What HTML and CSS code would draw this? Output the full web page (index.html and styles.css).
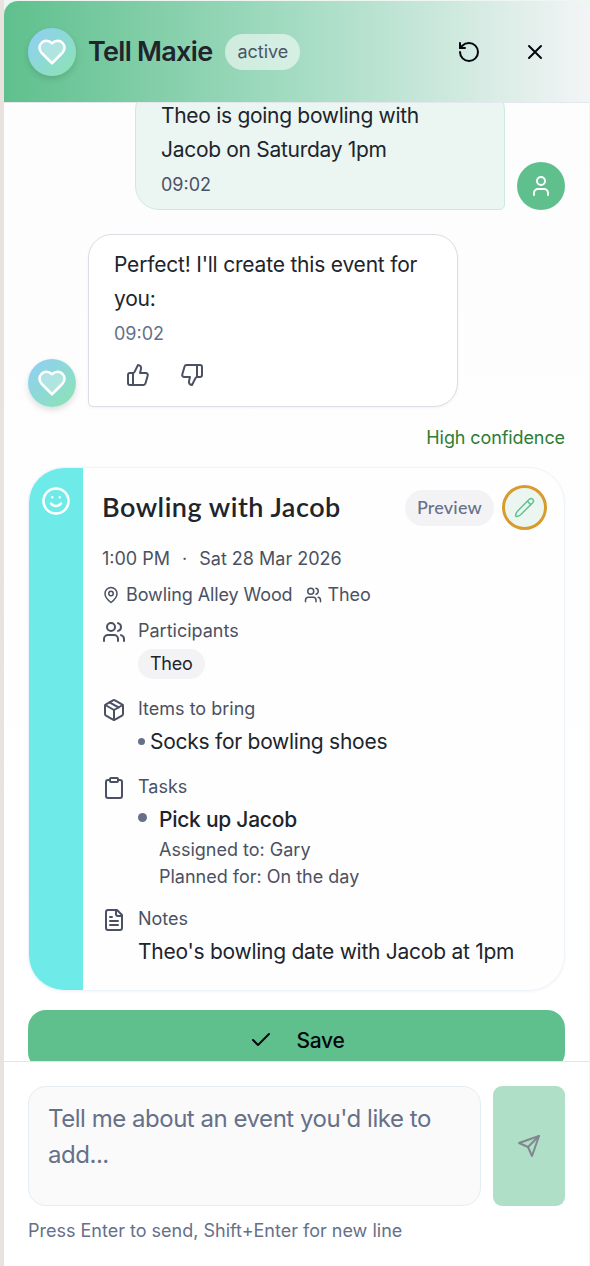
FILE: index.html
```html
<!DOCTYPE html>
<html lang="en">
<head>
    <meta charset="UTF-8">
    <title>Tell Maxie</title>
    <link rel="stylesheet" href="styles.css">
</head>
<body>
<svg class="defs">
    <symbol id="heart" viewBox="0 0 24 24"><path d="M19 14c1.49-1.46 3-3.21 3-5.5A5.5 5.5 0 0 0 16.5 3c-1.76 0-3 .5-4.5 2-1.5-1.5-2.74-2-4.5-2A5.5 5.5 0 0 0 2 8.5c0 2.3 1.5 4.05 3 5.5l7 7Z"/></symbol>
    <symbol id="users" viewBox="0 0 24 24"><path d="M16 21v-2a4 4 0 0 0-4-4H6a4 4 0 0 0-4 4v2"/><circle cx="9" cy="7" r="4"/><path d="M22 21v-2a4 4 0 0 0-3-3.87M16 3.13a4 4 0 0 1 0 7.75"/></symbol>
</svg>
<div class="panel">
    <header class="header">
        <div class="avatar"><svg class="icon"><use href="#heart"/></svg></div>
        <h1>Tell Maxie</h1>
        <span class="status">active</span>
        <button class="head-btn"><svg class="icon" viewBox="0 0 24 24"><path d="M3 12a9 9 0 1 0 9-9 9.75 9.75 0 0 0-6.74 2.74L3 8"/><path d="M3 3v5h5"/></svg></button>
        <button class="head-btn"><svg class="icon" viewBox="0 0 24 24"><path d="M18 6 6 18M6 6l12 12"/></svg></button>
    </header>
    <main class="messages">
        <div class="row user">
            <div class="bubble">
                <p>Theo is going bowling with<br>Jacob on Saturday 1pm</p>
                <time>09:02</time>
            </div>
            <div class="avatar"><svg class="icon" viewBox="0 0 24 24"><path d="M19 21v-2a4 4 0 0 0-4-4H9a4 4 0 0 0-4 4v2"/><circle cx="12" cy="7" r="4"/></svg></div>
        </div>
        <div class="row bot">
            <div class="avatar"><svg class="icon"><use href="#heart"/></svg></div>
            <div class="bubble">
                <p>Perfect! I'll create this event for<br>you:</p>
                <time>09:02</time>
                <div class="actions">
                    <svg class="icon" viewBox="0 0 24 24"><path d="M7 10v12"/><path d="M15 5.88 14 10h5.83a2 2 0 0 1 1.92 2.56l-2.33 8A2 2 0 0 1 17.5 22H4a2 2 0 0 1-2-2v-8a2 2 0 0 1 2-2h2.76a2 2 0 0 0 1.79-1.11L12 2a3.13 3.13 0 0 1 3 3.88Z"/></svg>
                    <svg class="icon" viewBox="0 0 24 24"><path d="M17 14V2"/><path d="M9 18.12 10 14H4.17a2 2 0 0 1-1.92-2.56l2.33-8A2 2 0 0 1 6.5 2H20a2 2 0 0 1 2 2v8a2 2 0 0 1-2 2h-2.76a2 2 0 0 0-1.79 1.11L12 22a3.13 3.13 0 0 1-3-3.88Z"/></svg>
                </div>
            </div>
        </div>
        <div class="confidence">High confidence</div>
        <article class="card">
            <div class="stripe"><svg class="icon" viewBox="0 0 24 24"><circle cx="12" cy="12" r="10"/><path d="M8 14s1.5 2 4 2 4-2 4-2M9 9h.01M15 9h.01"/></svg></div>
            <div class="content">
                <div class="card-head">
                    <h2>Bowling with Jacob</h2>
                    <span class="preview">Preview</span>
                    <button class="edit"><svg class="icon" viewBox="0 0 24 24"><path d="M17.3 3.2a2.5 2.5 0 0 1 3.5 3.5L8.2 19.3c-1 1-2.6 1.8-4.4 2-.8.1-1.2-.3-1.1-1.1.2-1.8 1-3.4 2-4.4Z"/><path d="m15 5.5 3.5 3.5"/></svg></button>
                </div>
                <div class="when"><span>1:00 PM</span><span>·</span><span>Sat 28 Mar 2026</span></div>
                <div class="where">
                    <svg class="icon" viewBox="0 0 24 24"><path d="M20 10c0 6-8 12-8 12s-8-6-8-12a8 8 0 0 1 16 0Z"/><circle cx="12" cy="10" r="3"/></svg>
                    <span>Bowling Alley Wood</span>
                    <svg class="icon"><use href="#users"/></svg>
                    <span>Theo</span>
                </div>
                <section>
                    <svg class="icon"><use href="#users"/></svg>
                    <div>
                        <h3>Participants</h3>
                        <div class="line"><span class="chip">Theo</span></div>
                    </div>
                </section>
                <section>
                    <svg class="icon" viewBox="0 0 24 24"><path d="m7.5 4.27 9 5.15"/><path d="M21 8a2 2 0 0 0-1-1.73l-7-4a2 2 0 0 0-2 0l-7 4A2 2 0 0 0 3 8v8a2 2 0 0 0 1 1.73l7 4a2 2 0 0 0 2 0l7-4A2 2 0 0 0 21 16Z"/><path d="m3.3 7 8.7 5 8.7-5M12 22V12"/></svg>
                    <div>
                        <h3>Items to bring</h3>
                        <div class="line"><i class="dot"></i>Socks for bowling shoes</div>
                    </div>
                </section>
                <section>
                    <svg class="icon" viewBox="0 0 24 24"><rect width="8" height="4" x="8" y="2" rx="1"/><path d="M16 4h2a2 2 0 0 1 2 2v14a2 2 0 0 1-2 2H6a2 2 0 0 1-2-2V6a2 2 0 0 1 2-2h2"/></svg>
                    <div>
                        <h3>Tasks</h3>
                        <div class="line task"><i class="dot big"></i>Pick up Jacob</div>
                        <p class="sub">Assigned to: Gary</p>
                        <p class="sub">Planned for: On the day</p>
                    </div>
                </section>
                <section>
                    <svg class="icon" viewBox="0 0 24 24"><path d="M15 2H6a2 2 0 0 0-2 2v16a2 2 0 0 0 2 2h12a2 2 0 0 0 2-2V7Z"/><path d="M14 2v4a2 2 0 0 0 2 2h4M10 9H8M16 13H8M16 17H8"/></svg>
                    <div>
                        <h3>Notes</h3>
                        <div class="line">Theo's bowling date with Jacob at 1pm</div>
                    </div>
                </section>
            </div>
        </article>
        <button class="save"><svg class="icon" viewBox="0 0 24 24"><path d="M20 6 9 17l-5-5"/></svg>Save</button>
    </main>
    <footer class="footer">
        <div class="compose">
            <textarea placeholder="Tell me about an event you'd like to add..."></textarea>
            <button class="send"><svg class="icon" viewBox="0 0 24 24"><path d="m22 2-7 20-4-9-9-4Z"/><path d="M22 2 11 13"/></svg></button>
        </div>
        <p class="hint">Press Enter to send, Shift+Enter for new line</p>
    </footer>
</div>
</body>
</html>
```
FILE: styles.css
```css
*{
    margin:0;
    padding:0;
    box-sizing:border-box;
}
body{
    height:1266px;
    padding:1px 1px 0 4px;
    overflow:hidden;
    background:linear-gradient(90deg,#e9e2de 4px,#eef6f2 4px);
    font-family:Inter, "Liberation Sans", sans-serif;
    font-size:18px;
    line-height:27px;
    color:#20242c;
}
button{
    border:0;
    font-family:inherit;
}
.defs{
    display:none;
}
.icon{
    display:block;
    flex:none;
    width:24px;
    height:24px;
    fill:none;
    stroke:currentColor;
    stroke-width:2;
    stroke-linecap:round;
    stroke-linejoin:round;
}
.panel{
    display:flex;
    flex-direction:column;
    height:1265px;
    border-radius:14px 14px 0 0;
    overflow:hidden;
    background:#fff;
}
.header{
    display:flex;
    flex:none;
    align-items:center;
    height:102px;
    padding:0 30px 0 24px;
    border-bottom:1px solid #e4e8ee;
    background:linear-gradient(90deg,#5fc08d,#a4dcc3 50%,#f3f4f6);
}
.header h1{
    margin:0 13px 0 12px;
    font-size:27px;
    font-weight:600;
    letter-spacing:-.7px;
    white-space:nowrap;
}
.status{
    height:36px;
    margin-right:auto;
    padding:0 12px;
    border-radius:18px;
    line-height:36px;
    color:#4b5563;
    background:rgba(255,255,255,.55);
}
.head-btn{
    display:grid;
    place-items:center;
    width:48px;
    height:48px;
    margin-left:18px;
    color:#05070f;
    background:none;
}
.avatar{
    display:grid;
    flex:none;
    place-items:center;
    width:48px;
    height:48px;
    border-radius:50%;
    color:#fff;
    background:linear-gradient(135deg,#90cef8,#8be4b0);
    box-shadow:0 3px 6px rgba(0,0,0,.13);
}
.avatar .icon{
    width:30px;
    height:30px;
    fill:rgba(255,255,255,.3);
}
.messages{
    display:flex;
    flex:none;
    flex-direction:column;
    height:958px;
    padding:0 24px;
    overflow:hidden;
    background:linear-gradient(#fdfdfd,#fff);
}
.row{
    display:flex;
    flex:none;
    align-items:flex-end;
    gap:12px;
}
.bubble{
    width:370px;
    padding:12px 24px 11px 25px;
    border:1px solid #dcdde5;
    border-radius:24px 24px 24px 5px;
    background:#fff;
    box-shadow:0 1px 3px rgba(0,0,0,.05);
}
.bubble p{
    font-size:21px;
    line-height:33.6px;
    letter-spacing:-.3px;
    white-space:nowrap;
}
.bubble time{
    display:block;
    margin-top:6px;
    line-height:26px;
    color:#667089;
}
.user{
    justify-content:flex-end;
    margin-top:-17px;
}
.user .bubble{
    border-color:#cdebdc;
    border-radius:24px 24px 5px 24px;
    background:#ebf5f1;
    box-shadow:none;
}
.user time{
    color:#4b5168;
}
.user .avatar{
    background:#5fc08d;
    box-shadow:none;
}
.user .avatar .icon{
    width:24px;
    height:24px;
    fill:none;
}
.bot{
    margin-top:24px;
}
.bot .bubble{
    padding-top:13px;
    padding-bottom:10px;
}
.bot p{
    letter-spacing:-.2px;
}
.actions{
    display:flex;
    align-items:center;
    gap:30px;
    height:42px;
    margin-top:7px;
    padding-left:12px;
    color:#4b5163;
}
.confidence{
    flex:none;
    margin:17px 0 16px;
    letter-spacing:-.1px;
    text-align:right;
    color:#2e7d32;
}
.card{
    display:flex;
    flex:none;
    height:524px;
    border:1px solid #edf4fa;
    border-radius:36px;
    overflow:hidden;
    background:#fefefe;
    box-shadow:0 1px 3px rgba(0,0,0,.04);
}
.stripe{
    flex:none;
    width:54px;
    padding:18px 12px;
    color:#fff;
    background:#6eebe9;
}
.stripe .icon{
    width:30px;
    height:30px;
}
.content{
    flex:1;
    padding:17px 17px 0 19px;
    color:#4b5163;
}
.card-head{
    display:flex;
    align-items:center;
    margin-bottom:15px;
}
.card-head h2{
    margin-right:auto;
    padding-bottom:2px;
    font-family:Lato, sans-serif;
    font-size:27px;
    font-weight:600;
    letter-spacing:.5px;
    color:#20242c;
    white-space:nowrap;
}
.preview{
    height:36px;
    margin-right:8px;
    padding:0 12px;
    border-radius:18px;
    font-family:Lato, sans-serif;
    font-weight:500;
    letter-spacing:.2px;
    line-height:35px;
    color:#667089;
    background:#f3f3f6;
}
.edit{
    display:grid;
    place-items:center;
    width:45px;
    height:45px;
    border:3px solid #d99b2e;
    border-radius:50%;
    color:#5fc08d;
    background:#ecf6f1;
}
.edit .icon{
    width:23px;
    height:23px;
    stroke-width:1.5;
}
.when{
    display:flex;
    gap:12px;
}
.where{
    display:flex;
    align-items:center;
    margin:9px 0;
}
.where .icon{
    width:18px;
    height:18px;
}
.where span{
    margin:0 11px 0 6px;
    letter-spacing:-.1px;
}
section{
    display:flex;
    gap:12px;
    margin-bottom:15px;
}
section .icon{
    margin-top:3px;
}
h3{
    font-size:18px;
    font-weight:400;
}
.line{
    display:flex;
    align-items:center;
    height:33px;
    margin-top:3px;
    font-size:21px;
    letter-spacing:-.26px;
    color:#20242c;
    white-space:nowrap;
}
.chip{
    padding:0 12px;
    border-radius:15px;
    font-size:18px;
    line-height:30px;
    background:#f3f3f6;
}
.dot{
    width:7px;
    height:7px;
    margin-right:5px;
    border-radius:50%;
    background:#667089;
}
.dot.big{
    width:9px;
    height:9px;
    margin:-4px 12px 0 0;
}
.task{
    font-weight:500;
}
.sub{
    padding-left:21px;
}
.save{
    display:flex;
    flex:none;
    align-items:center;
    justify-content:center;
    gap:24px;
    height:60px;
    margin-top:19px;
    border-radius:18px;
    font-size:21px;
    font-weight:500;
    letter-spacing:-.3px;
    color:#05070f;
    background:#5fc08d;
}
.footer{
    flex:1;
    padding:24px 24px 0;
    border-top:1px solid #dfe6ee;
    background:#fff;
}
.compose{
    display:flex;
    gap:12px;
}
textarea{
    width:453px;
    height:120px;
    padding:14px 18px 14px 19px;
    border:1px solid #e3eef4;
    border-radius:18px;
    outline:0;
    resize:none;
    font-family:inherit;
    font-size:24px;
    line-height:36px;
    letter-spacing:-.47px;
    background:#fafafa;
}
textarea::placeholder{
    color:#667089;
}
.send{
    display:grid;
    place-items:center;
    width:72px;
    height:120px;
    border-radius:9px;
    color:#82868f;
    background:#afdfc6;
}
.hint{
    margin-top:11px;
    color:#667089;
}
```
